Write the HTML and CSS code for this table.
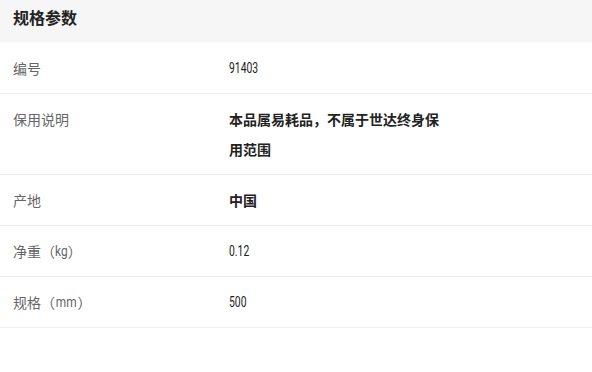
FILE: index.html
```html
<!DOCTYPE html>
<html lang="zh-CN">
<head>
<meta charset="utf-8">
<link rel="stylesheet" href="styles.css">
</head>
<body>
<section class="spec">
  <h2 class="spec-title">规格参数</h2>
  <div class="spec-row">
    <div class="spec-label">编号</div>
    <div class="spec-value"><span class="num">91403</span></div>
  </div>
  <div class="spec-row">
    <div class="spec-label">保用说明</div>
    <div class="spec-value bold">本品属易耗品，不属于世达终身保用范围</div>
  </div>
  <div class="spec-row">
    <div class="spec-label">产地</div>
    <div class="spec-value bold">中国</div>
  </div>
  <div class="spec-row">
    <div class="spec-label">净重（<span class="lat">kg</span>）</div>
    <div class="spec-value"><span class="num">0.12</span></div>
  </div>
  <div class="spec-row">
    <div class="spec-label">规格（<span class="lat">mm</span>）</div>
    <div class="spec-value"><span class="num">500</span></div>
  </div>
</section>
</body>
</html>
```
FILE: styles.css
```css
html, body {
  margin: 0;
  padding: 0;
  background: #fff;
}
body {
  font-family: "Noto Sans CJK SC", "Noto Sans", sans-serif;
}
.spec {
  width: 592px;
}
.spec-title {
  margin: 0 0 1px;
  background: #f6f6f6;
  height: 42px;
  box-sizing: border-box;
  padding: 5px 13px 0;
  font-size: 16px;
  line-height: 24px;
  font-weight: 700;
  color: #222;
}
.spec-row {
  display: flex;
  padding: 10px 13px;
  border-bottom: 1px solid #eeeeee;
  font-size: 14px;
  line-height: 30px;
  height: 30px;
}
.spec-row:nth-child(3) {
  height: 60px;
}
.spec-label {
  width: 216px;
  flex: none;
  color: #666;
}
.spec-value {
  width: 214px;
  color: #222;
}
.bold {
  font-weight: 700;
}
.num {
  display: inline-block;
  vertical-align: top;
  line-height: 30px;
  font-family: Roboto, "Liberation Sans", sans-serif;
  font-size: 14px;
  transform: scaleX(0.74);
  transform-origin: left center;
}
.lat {
  display: inline-block;
  vertical-align: top;
  line-height: 30px;
  font-family: Roboto, "Liberation Sans", sans-serif;
  font-size: 14px;
  transform: scaleX(0.85);
  margin: 0 -1px;
}
```
